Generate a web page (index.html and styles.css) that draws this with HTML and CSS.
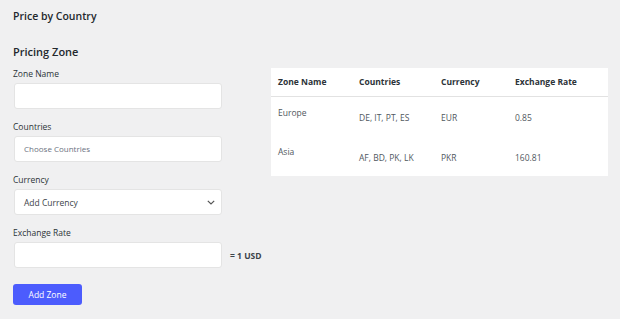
FILE: index.html
```html
<!DOCTYPE html>
<html lang="en">
<head>
    <meta charset="UTF-8">
    <title>Price by Country</title>
    <link rel="stylesheet" href="styles.css">
</head>
<body>
<div class="wrap">
    <h1 class="page_title">Price by Country</h1>
    <div class="zone_layout">
        <form class="zone_form">
            <h2>Pricing Zone</h2>
            <div class="field">
                <label>Zone Name</label>
                <input type="text" class="txt">
            </div>
            <div class="field">
                <label>Countries</label>
                <div class="txt choose">Choose Countries</div>
            </div>
            <div class="field">
                <label>Currency</label>
                <div class="txt select">
                    <span>Add Currency</span>
                    <svg width="8" height="5" viewBox="0 0 8 5"><path d="M0.8 0.8 L4 4 L7.2 0.8" fill="none" stroke="#555" stroke-width="1.2"/></svg>
                </div>
            </div>
            <div class="field">
                <label>Exchange Rate</label>
                <div class="rate_row">
                    <input type="text" class="txt">
                    <span class="usd">= 1 USD</span>
                </div>
            </div>
            <button type="button" class="btn">Add Zone</button>
        </form>
        <table class="zones">
            <thead>
            <tr>
                <th>Zone Name</th>
                <th>Countries</th>
                <th>Currency</th>
                <th>Exchange Rate</th>
            </tr>
            </thead>
            <tbody>
            <tr>
                <td class="name">Europe</td>
                <td>DE, IT, PT, ES</td>
                <td>EUR</td>
                <td>0.85</td>
            </tr>
            <tr>
                <td class="name">Asia</td>
                <td>AF, BD, PK, LK</td>
                <td>PKR</td>
                <td>160.81</td>
            </tr>
            </tbody>
        </table>
    </div>
</div>
</body>
</html>
```

FILE: styles.css
```css
* {
    margin: 0;
    padding: 0;
    box-sizing: border-box;
}
html, body {
    background: #f0f0f1;
}
body {
    font-family: "Open Sans", "Noto Sans", sans-serif;
    color: #3c434a;
}
.wrap {
    padding: 8px 12px 0 13px;
}
.page_title {
    font-size: 10.5px;
    font-weight: 600;
    color: #23282d;
    line-height: 16px;
}
.zone_layout {
    display: flex;
    align-items: flex-start;
    margin-top: 20px;
}
.zone_form {
    width: 258px;
}
.zone_form h2 {
    font-size: 11px;
    font-weight: 600;
    color: #23282d;
    line-height: 16px;
    margin-bottom: 8px;
}
.field {
    margin-bottom: 12px;
}
.field label {
    display: block;
    font-size: 8.5px;
    line-height: 12px;
    color: #2c3338;
    margin-bottom: 3px;
}
.txt {
    display: block;
    width: 208px;
    height: 26px;
    margin-left: 1px;
    background: #fff;
    border: 1px solid #e4e4e4;
    border-radius: 3px;
    font-family: inherit;
    outline: none;
}
.choose {
    font-size: 8px;
    color: #6b7280;
    line-height: 24px;
    padding-left: 9px;
}
.select {
    display: flex;
    align-items: center;
    justify-content: space-between;
    padding: 0 6px 0 9px;
    font-size: 8.5px;
    color: #3c434a;
}
.rate_row {
    display: flex;
    align-items: center;
}
.usd {
    margin-left: 8px;
    font-size: 8.5px;
    font-weight: 700;
    color: #3c434a;
}
.btn {
    margin-top: 4px;
    width: 69px;
    height: 21px;
    background: #4c5cfd;
    color: #fff;
    border: 0;
    border-radius: 3px;
    font-family: inherit;
    font-size: 8.5px;
}
.zones {
    width: 337px;
    margin-top: 24px;
    background: #fff;
    border-collapse: collapse;
    font-size: 8.5px;
    color: #50575e;
}
.zones th {
    text-align: left;
    font-weight: 700;
    color: #2c3338;
    height: 28px;
    padding: 0 0 0 7px;
    border-bottom: 1px solid #e2e2e2;
}
.zones td {
    height: 40px;
    padding: 2px 0 0 7px;
    vertical-align: middle;
}
.zones td.name {
    vertical-align: top;
    padding-top: 10px;
}
.zones th:nth-child(1), .zones td:nth-child(1) { width: 81px; }
.zones th:nth-child(2), .zones td:nth-child(2) { width: 82px; }
.zones th:nth-child(3), .zones td:nth-child(3) { width: 74px; }
```
